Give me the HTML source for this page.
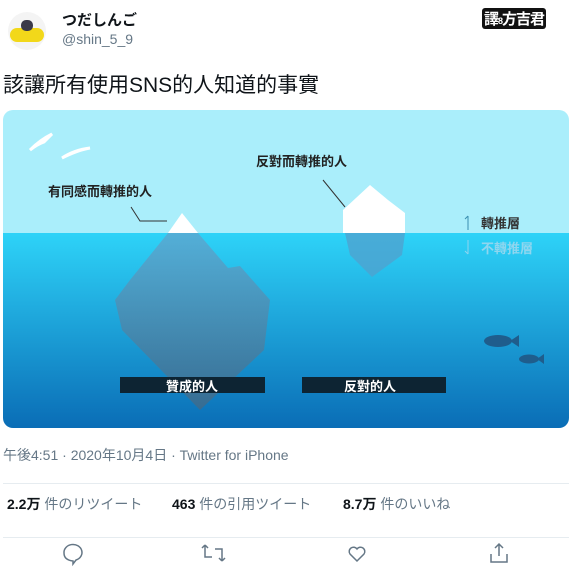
<!DOCTYPE html><html><head><meta charset="utf-8"><style>
body{margin:0;width:572px;height:570px;background:#fff;font-family:"Liberation Sans","Noto Sans CJK JP",sans-serif;position:relative;overflow:hidden;color:#0f1419}
.a{position:absolute;white-space:nowrap}
.s{font-size:14px;color:#657786;top:494px}
.s b{color:#0f1419}
</style></head><body>
<div class="a" style="left:8px;top:12px;width:38px;height:38px;border-radius:50%;background:#f4f4f4"></div>
<div class="a" style="left:10px;top:28px;width:34px;height:14px;border-radius:8px;background:#f2d81a"></div>
<div class="a" style="left:21px;top:20px;width:12px;height:11px;border-radius:5px;background:#3a3a4a"></div>
<div class="a" style="left:62px;top:9px;font-size:15px;font-weight:bold">つだしんご</div>
<div class="a" style="left:62px;top:31px;font-size:14px;color:#657786">@shin_5_9</div>
<div class="a" style="left:482px;top:8px;font-size:15px;font-weight:bold;background:#111;color:#fff;padding:0 2px;border-radius:3px;letter-spacing:-1px">譯<span style="font-size:9px">8</span>方吉君</div>
<div class="a" style="left:3px;top:69px;font-size:21px">該讓所有使用SNS的人知道的事實</div>
<svg class="a" style="left:0;top:0" width="572" height="440">
<defs><clipPath id="c"><rect x="3" y="110" width="566" height="318" rx="10"/></clipPath>
<linearGradient id="w" x1="0" y1="0" x2="0" y2="1"><stop offset="0" stop-color="#2ed3f8"/><stop offset="1" stop-color="#0a6db6"/></linearGradient>
<linearGradient id="i" x1="0" y1="0" x2="0" y2="1"><stop offset="0" stop-color="#5aa9d2"/><stop offset="1" stop-color="#3e6a8a"/></linearGradient></defs>
<g clip-path="url(#c)">
<rect x="3" y="110" width="566" height="124" fill="#aaeefb"/>
<rect x="3" y="233" width="566" height="195" fill="url(#w)"/>
<path d="M168 233L198 233L228 268L240 266L270 300L264 350L200 410L122 330L115 300L130 280Z" fill="url(#i)" opacity=".85"/>
<path d="M168 233L182 213L198 233Z" fill="#fff"/>
<path d="M343 233L343 210L370 185L388 200L405 213L405 233Z" fill="#fff"/>
<path d="M345 233L405 233L402 255L372 277L350 255Z" fill="#4fa2cf" opacity=".8"/>
<path d="M30 150q10-10 22-16l-8 8q-6 2-14 8zM62 158q12-8 28-10q-12 2-28 10z" stroke="#fff" stroke-width="3" fill="none"/>
<path d="M131 207l9 14h27M323 180l22 27" stroke="#333" stroke-width="1" fill="none"/>
<ellipse cx="498" cy="341" rx="14" ry="6" fill="#1f5d8c"/><path d="M510 341l9-6v12z" fill="#1f5d8c"/>
<ellipse cx="529" cy="359" rx="10" ry="4.5" fill="#1f5d8c"/><path d="M537 359l7-5v10z" fill="#1f5d8c"/>
<rect x="120" y="377" width="145" height="16" fill="#0d2433"/>
<rect x="302" y="377" width="144" height="16" fill="#0d2433"/>
<path d="M468 230v-14m-3 3l3-3" stroke="#3a8fb0" fill="none"/>
<path d="M468 240v14m-3-3l3 3" stroke="#8fd4ef" fill="none"/>
</g></svg>
<div class="a" style="left:48px;top:181px;font-size:13px;font-weight:bold;color:#222">有同感而轉推的人</div>
<div class="a" style="left:256px;top:151px;font-size:13px;font-weight:bold;color:#222">反對而轉推的人</div>
<div class="a" style="left:481px;top:213px;font-size:13px;font-weight:bold;color:#333">轉推層</div>
<div class="a" style="left:481px;top:238px;font-size:13px;font-weight:bold;color:#8fd6ef">不轉推層</div>
<div class="a" style="left:166px;top:376px;font-size:13px;font-weight:bold;color:#fff">贊成的人</div>
<div class="a" style="left:344px;top:376px;font-size:13px;font-weight:bold;color:#fff">反對的人</div>
<div class="a" style="left:3px;top:445px;font-size:14px;color:#657786">午後4:51 · 2020年10月4日 · Twitter for iPhone</div>
<div class="a" style="left:3px;top:483px;width:566px;height:1px;background:#e6ecf0"></div>
<div class="a s" style="left:7px"><b>2.2万</b> 件のリツイート</div>
<div class="a s" style="left:172px"><b>463</b> 件の引用ツイート</div>
<div class="a s" style="left:343px"><b>8.7万</b> 件のいいね</div>
<div class="a" style="left:3px;top:537px;width:566px;height:1px;background:#e6ecf0"></div>
<svg class="a" style="left:0;top:540px" width="572" height="30" fill="none" stroke="#657786" stroke-width="1.5">
<path d="M73 21q-9-1-9-8a9 8 0 1 1 12 7l-3 4z"/>
<path d="M205 5l-3 3m3-3l3 3m-3-3v12h7M222 21l-3-3m3 3l3-3m-3 3V9h-7"/>
<path d="M357 21l-7-7a4 4 0 0 1 7-5a4 4 0 0 1 7 5z"/>
<path d="M491 14v8h16v-8M499 4v12M495 8l4-4 4 4"/>
</svg>
</body></html>
